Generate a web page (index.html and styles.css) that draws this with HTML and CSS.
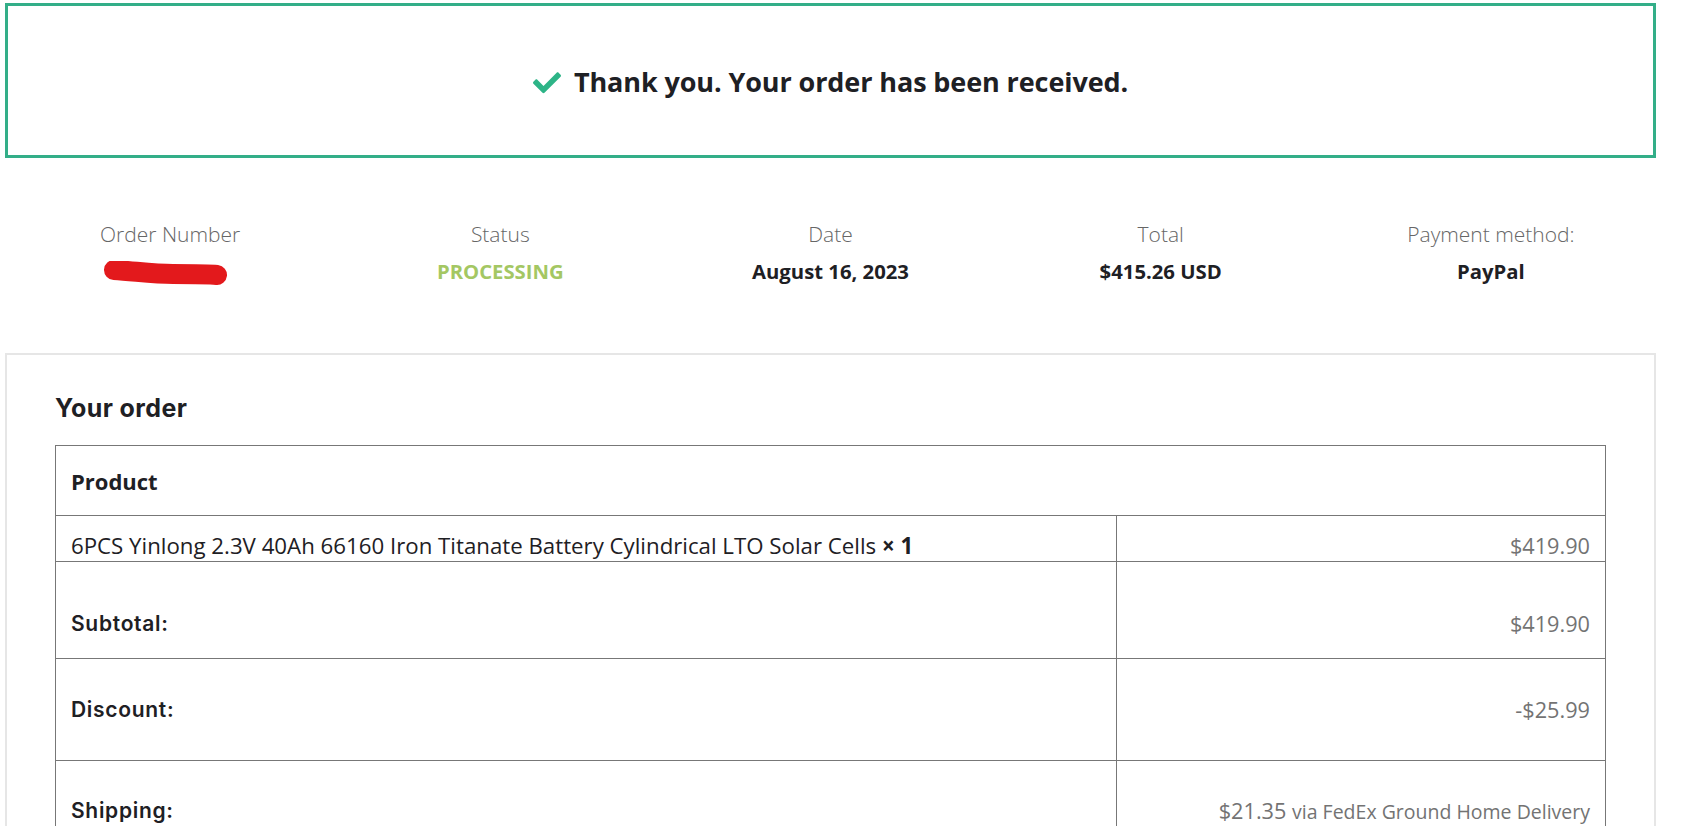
FILE: index.html
```html
<!DOCTYPE html>
<html lang="en">
<head>
<meta charset="utf-8">
<title>Order received</title>
<link rel="stylesheet" href="styles.css">
</head>
<body>
<div class="page">
  <div class="notice">
    <svg class="check" viewBox="0 0 512 400" width="28" height="22" aria-hidden="true">
      <path d="M173.9 379.4l-166.4-166.4c-10-10-10-26.2 0-36.2l36.2-36.2c10-10 26.2-10 36.2 0L192 252.7 432.1 12.6c10-10 26.2-10 36.2 0l36.2 36.2c10 10 10 26.2 0 36.2l-294.4 294.4c-10 10-26.2 10-36.2 0z" fill="#2db487"/>
    </svg>
    <span class="notice-text">Thank you. Your order has been received.</span>
  </div>

  <ul class="overview">
    <li class="ov-item">
      <span class="ov-label">Order Number</span>
      <span class="ov-value">
        <svg class="redact" viewBox="0 0 126 26" width="126" height="26" aria-hidden="true">
          <path d="M11 9 C 30 10, 50 13, 70 13 C 90 13, 105 13, 114 14" stroke="#e3191c" stroke-width="20" stroke-linecap="round" fill="none"/>
        </svg>
      </span>
    </li>
    <li class="ov-item">
      <span class="ov-label">Status</span>
      <span class="ov-value status">PROCESSING</span>
    </li>
    <li class="ov-item">
      <span class="ov-label">Date</span>
      <span class="ov-value">August 16, 2023</span>
    </li>
    <li class="ov-item">
      <span class="ov-label">Total</span>
      <span class="ov-value">$415.26 USD</span>
    </li>
    <li class="ov-item">
      <span class="ov-label">Payment method:</span>
      <span class="ov-value">PayPal</span>
    </li>
  </ul>

  <section class="order-box">
    <h2 class="order-title">Your order</h2>
    <table class="order-table">
      <colgroup>
        <col class="col-name">
        <col class="col-val">
      </colgroup>
      <thead>
        <tr class="row-head">
          <th colspan="2">Product</th>
        </tr>
      </thead>
      <tbody>
        <tr class="row-item">
          <td class="c-name">6PCS Yinlong 2.3V 40Ah 66160 Iron Titanate Battery Cylindrical LTO Solar Cells <strong>× 1</strong></td>
          <td class="c-val">$419.90</td>
        </tr>
      </tbody>
      <tfoot>
        <tr class="row-sub">
          <th>Subtotal:</th>
          <td class="c-val">$419.90</td>
        </tr>
        <tr class="row-disc">
          <th>Discount:</th>
          <td class="c-val">-$25.99</td>
        </tr>
        <tr class="row-ship">
          <th>Shipping:</th>
          <td class="c-val">$21.35 <small>via FedEx Ground Home Delivery</small></td>
        </tr>
      </tfoot>
    </table>
  </section>
</div>
</body>
</html>
```

FILE: styles.css
```css
* { box-sizing: border-box; }

html, body {
  margin: 0;
  padding: 0;
  background: #fff;
}

body {
  font-family: "Open Sans", "Liberation Sans", Arial, sans-serif;
  color: #1f2124;
  overflow: hidden;
}

.page {
  width: 1651px;
  margin: 3px 0 0 5px;
}

.notice {
  height: 155px;
  border: 3px solid #33ae88;
  display: flex;
  align-items: center;
  justify-content: center;
  gap: 13px;
  padding-top: 2px;
}

.check {
  display: block;
  margin-top: 2px;
}

.notice-text {
  font-size: 27px;
  font-weight: 700;
  color: #1e2024;
  letter-spacing: -0.1px;
}

.overview {
  list-style: none;
  margin: 0;
  padding: 0;
  display: grid;
  grid-template-columns: repeat(5, 1fr);
  height: 195px;
  padding-top: 62px;
}

.ov-item {
  display: flex;
  flex-direction: column;
  align-items: center;
  gap: 9px;
}

.ov-label {
  font-size: 21px;
  font-weight: 300;
  color: #666;
  line-height: 28px;
}

.ov-value {
  font-size: 20.3px;
  font-weight: 700;
  line-height: 28px;
  color: #1e2024;
  height: 28px;
  display: flex;
  align-items: center;
}

.ov-value.status {
  color: #a4c763;
}

.redact {
  display: block;
  margin-top: 6px;
  margin-left: -8px;
}

.order-box {
  border: 2px solid #e6e6e6;
  padding: 0 48px 0 48px;
  height: 480px;
}

.order-title {
  margin: 0;
  padding-top: 38px;
  height: 90px;
  font-family: "Inter", "Liberation Sans", Arial, sans-serif;
  font-size: 25px;
  font-weight: 700;
  letter-spacing: 0.4px;
  line-height: 30px;
  color: #1e2024;
}

.order-table {
  width: 1550px;
  border-collapse: collapse;
  table-layout: fixed;
}

.col-name { width: 1061px; }
.col-val { width: 489px; }

.order-table th,
.order-table td {
  border: 1px solid #777;
  text-align: left;
  vertical-align: top;
  padding: 0 15px;
  line-height: 28px;
}

.order-table td.c-name {
  font-size: 22.25px;
  color: #1e2024;
}

.order-table td.c-name strong {
  font-weight: 700;
}

.order-table .c-val {
  text-align: right;
  font-size: 21.7px;
  color: #737373;
}

.order-table .c-val small {
  font-size: 19.5px;
}

.row-head th {
  height: 70px;
  vertical-align: middle;
  font-size: 22px;
  font-weight: 700;
  color: #1e2024;
}

.row-item td {
  height: 46px;
  padding-top: 16px;
  overflow: hidden;
  white-space: nowrap;
}

tfoot th {
  font-family: "Inter", "Liberation Sans", Arial, sans-serif;
  font-size: 21px;
  font-weight: 600;
  color: #1e2024;
  letter-spacing: 0.7px;
}

.row-sub th,
.row-sub td {
  height: 97px;
  padding-top: 48px;
}

.row-disc th,
.row-disc td {
  height: 102px;
  padding-top: 37px;
}

.row-ship th,
.row-ship td {
  height: 110px;
  padding-top: 36px;
}
```
